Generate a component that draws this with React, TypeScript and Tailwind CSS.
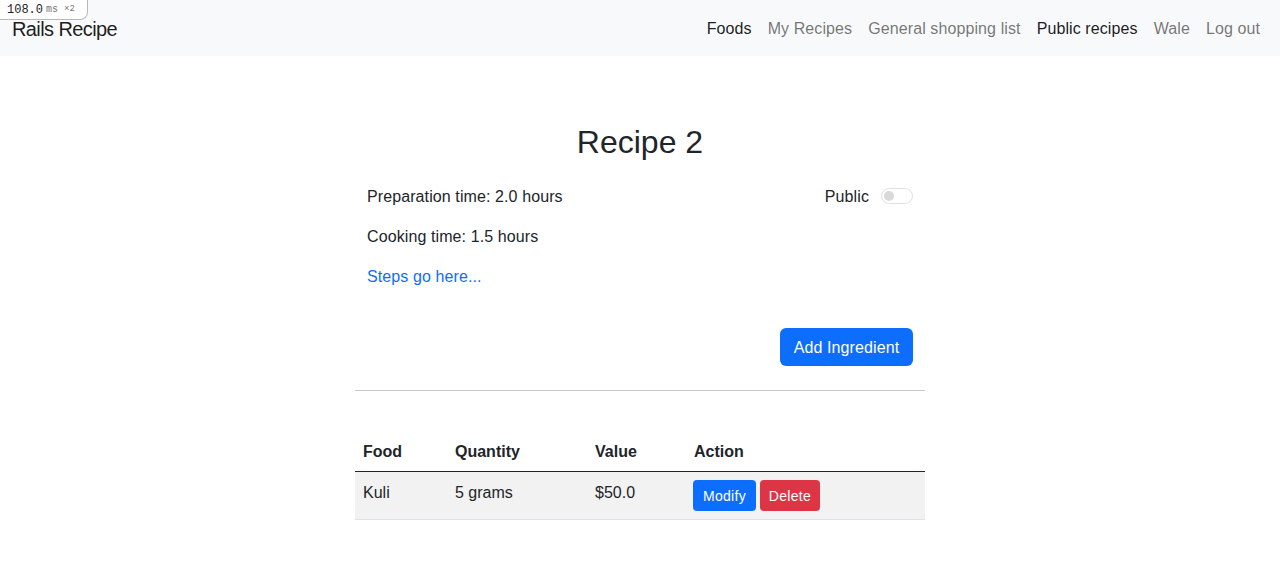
import React from "react";

export default function App() {
  const font = { fontFamily: '"Liberation Sans", Arial, sans-serif' };
  return (
    <div className="min-h-[575px] bg-white text-[#212529] relative" style={font}>
      {/* profiler badge */}
      <div className="absolute left-0 top-0 z-10 h-[20px] w-[88px] bg-white border border-[#b8b8b8] border-t-0 border-l-0 rounded-br-[8px] flex items-center pl-[7px] gap-[3px] text-[12px] leading-none" style={{ fontFamily: '"Liberation Mono", monospace' }}>
        <span className="text-[#222]">108.0</span>
        <span className="text-[#777] text-[10px]">ms</span>
        <span className="text-[#777] text-[9px] ml-[3px]">×2</span>
      </div>

      <nav className="h-[56px] bg-[#f8f9fa] flex items-center justify-between px-[12px]">
        <a className="text-[20px] tracking-[-0.6px] text-[rgba(0,0,0,0.9)] leading-[30px] mt-[1px]">Rails Recipe</a>
        <ul className="flex items-center text-[16px] tracking-[0.1px] mt-[1px]">
          <li><a className="px-[8px] text-[rgba(0,0,0,0.9)]">Foods</a></li>
          <li><a className="px-[8px] text-[rgba(0,0,0,0.55)]">My Recipes</a></li>
          <li><a className="px-[8px] text-[rgba(0,0,0,0.55)]">General shopping list</a></li>
          <li><a className="px-[8px] text-[rgba(0,0,0,0.9)]">Public recipes</a></li>
          <li><a className="px-[8px] text-[rgba(0,0,0,0.55)]">Wale</a></li>
          <li><a className="px-[8px] text-[rgba(0,0,0,0.55)]">Log out</a></li>
        </ul>
      </nav>

      <main className="w-[570px] mx-auto">
        <h1 className="text-[32px] font-medium leading-[38px] text-center mt-[67px] mb-[23px]">Recipe 2</h1>
        <div className="px-[12px] text-[16px] leading-[24px] tracking-[0.1px]">
          <div className="flex justify-between items-center h-[24px]">
            <p className="translate-y-[1px]">Preparation time: 2.0 hours</p>
            <div className="flex items-center gap-[12px]">
              <span className="translate-y-[1px]">Public</span>
              <span className="w-[32px] h-[16px] rounded-full border border-[#dee2e6] bg-white flex items-center px-[2px]">
                <span className="w-[10px] h-[10px] rounded-full bg-[#d9d9d9]" />
              </span>
            </div>
          </div>
          <p className="mt-[16px] translate-y-[1px]">Cooking time: 1.5 hours</p>
          <p className="mt-[16px] translate-y-[1px] text-[#0d6efd]">Steps go here...</p>
          <div className="flex justify-end mt-[40px]">
            <button className="h-[38px] w-[133px] rounded-[6px] bg-[#0d6efd] text-white text-[16px] tracking-[0.1px]">
              <span className="inline-block translate-y-[1px]">Add Ingredient</span>
            </button>
          </div>
        </div>
        <hr className="mt-[24px] border-t border-[#c8c8c8]" />
        <table className="w-full mt-[40px] text-[16px] leading-[24px] text-left border-collapse">
          <thead>
            <tr className="border-b border-[#212529]">
              <th className="px-[8px] pt-[9px] pb-[7px] font-bold w-[92px]">Food</th>
              <th className="px-[8px] pt-[9px] pb-[7px] font-bold w-[140px]">Quantity</th>
              <th className="px-[8px] pt-[9px] pb-[7px] font-bold w-[99px]">Value</th>
              <th className="px-[8px] pt-[9px] pb-[7px] font-bold">Action</th>
            </tr>
          </thead>
          <tbody>
            <tr className="bg-[#f2f2f2] border-b border-[#dee2e6]">
              <td className="px-[8px] pt-[9px] pb-[7px] align-top">Kuli</td>
              <td className="px-[8px] pt-[9px] pb-[7px] align-top">5 grams</td>
              <td className="px-[8px] pt-[9px] pb-[7px] align-top">$50.0</td>
              <td className="p-[8px] pl-[7px] align-top">
                <div className="flex gap-[4px]">
                  <button className="h-[31px] w-[63px] rounded-[4px] bg-[#0d6efd] text-white text-[14px] tracking-[0.3px]">Modify</button>
                  <button className="h-[31px] w-[60px] rounded-[4px] bg-[#dc3545] text-white text-[14px] tracking-[0.3px]">Delete</button>
                </div>
              </td>
            </tr>
          </tbody>
        </table>
      </main>
    </div>
  );
}
